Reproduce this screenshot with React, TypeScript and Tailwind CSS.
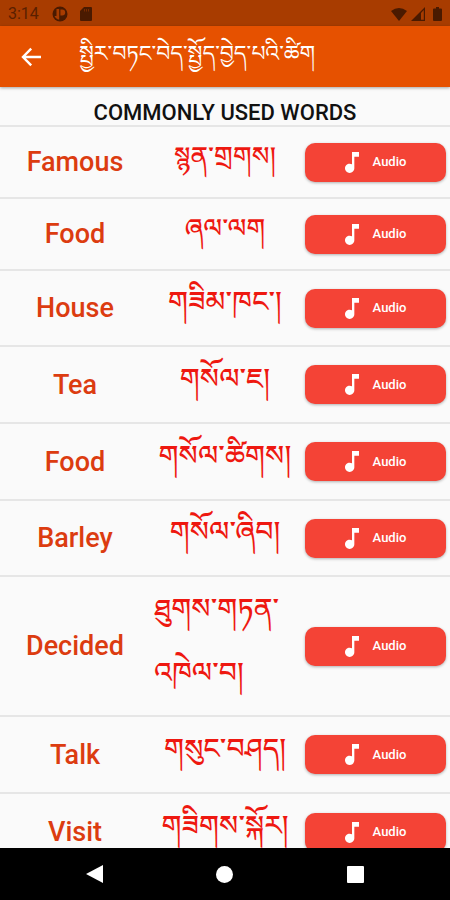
import { clsx } from "clsx";

const words = [
  { english: "Famous", tibetan: "སྙན་གྲགས།", height: "h-[72px]", size: "text-[26px]" },
  { english: "Food", tibetan: "ཞལ་ལག", height: "h-[72px]", size: "text-[26px]" },
  { english: "House", tibetan: "གཟིམ་ཁང་།", height: "h-[76px]", size: "text-[28px]" },
  { english: "Tea", tibetan: "གསོལ་ཇ།", height: "h-[77px]", size: "text-[28px]" },
  { english: "Food", tibetan: "གསོལ་ཚིགས།", height: "h-[77px]", size: "text-[28px]" },
  { english: "Barley", tibetan: "གསོལ་ཞིབ།", height: "h-[76px]", size: "text-[28px]" },
  { english: "Decided", tibetan: "ཐུགས་གཏན་འཁེལ་བ།", height: "h-[140px]", size: "text-[28px]", wraps: true },
  { english: "Talk", tibetan: "གསུང་བཤད།", height: "h-[77px]", size: "text-[28px]" },
  { english: "Visit", tibetan: "གཟིགས་སྐོར།", height: "h-[77px]", size: "text-[28px]" },
];

function StatusBar() {
  return (
    <div className="flex h-[26px] shrink-0 items-center justify-between bg-[#a83c00] pt-0.5 pr-2 pl-2 text-[#4a1a00]">
      <div className="flex items-center gap-3">
        <span className="w-8 text-base leading-5 text-[#5a2000]">3:14</span>
        <svg className="size-4" viewBox="0 0 16 16">
          <circle cx="8" cy="8" r="7.5" fill="currentColor" />
          <path fill="#a83c00" d="M4.500 3h2.700v10.400H6a6 6 0 0 1-3.500-3.500h2ZM8.400 3.500h1.800a3 3 0 0 1 0 6H8.400Z" />
        </svg>
        <svg className="h-[14px] w-3" viewBox="0 0 12 14">
          <path fill="currentColor" d="M4 0h7q1 0 1 1v12q0 1-1 1H1q-1 0-1-1V4Z" />
          <path stroke="#a83c00" strokeWidth="0.5" d="M4.500 2v2.500M6.500 2v2.500M8.500 2v2.500" />
        </svg>
      </div>
      <div className="flex items-center gap-1">
        <svg className="h-[13px] w-4" viewBox="0 0 16 13" fill="currentColor">
          <path d="M0 3Q8-3 16 3L8 13Z" />
        </svg>
        <svg className="size-[14px]" viewBox="0 0 14 14" fill="currentColor">
          <path d="M14 0v14H0Zm-1.200 3L10 6v6.800h2.800Z" fillRule="evenodd" />
        </svg>
        <svg className="ml-1 h-[14px] w-[9px]" viewBox="0 0 9 14" fill="currentColor">
          <path d="M3 0h3v1.500h2q1 0 1 1V13q0 1-1 1H1q-1 0-1-1V2.500q0-1 1-1h2Z" />
        </svg>
      </div>
    </div>
  );
}

function AudioButton({ word }: { word: string }) {
  return (
    <button
      aria-label={`Audio for ${word}`}
      className="flex h-[39px] w-full items-center justify-center gap-3.5 rounded-[10px] bg-[#f44336] text-[13px] leading-4 font-medium text-white shadow-[0_1px_3px_rgba(0,0,0,0.3)]"
    >
      <svg className="h-[21px] w-[14px]" viewBox="6 3 12 18" fill="currentColor">
        <path d="M12 3v10.550c-.59-.34-1.270-.55-2-.55-2.210 0-4 1.790-4 4s1.790 4 4 4 4-1.790 4-4V7h4V3h-6z" />
      </svg>
      Audio
    </button>
  );
}

export default function App() {
  return (
    <div className="flex h-screen flex-col overflow-hidden bg-[#fafafa] font-[Roboto,'Noto_Serif_Tibetan','Noto_Sans_Tibetan',sans-serif]">
      <StatusBar />

      <header className="z-10 flex h-[61px] shrink-0 items-center bg-[#e65100] pl-[19px] text-white shadow-[0_1px_3px_rgba(0,0,0,0.35)]">
        <button aria-label="Back" className="flex size-6 items-center justify-center">
          <svg className="size-6" viewBox="0 0 24 24" fill="none" stroke="currentColor" strokeWidth="2.400">
            <path d="M22 12H4M12.200 3.700 4 12l8.200 8.300" />
          </svg>
        </button>
        <h1 lang="bo" className="ml-9 pb-1.5 text-[22px] leading-8 font-normal whitespace-nowrap">སྤྱིར་བཏང་བེད་སྤྱོད་བྱེད་པའི་ཚིག</h1>
      </header>

      <main className="min-h-0 flex-1 overflow-y-auto [scrollbar-width:none]">
        <h2 className="flex h-[38px] items-end justify-center text-[22px] leading-6 font-medium text-[#111111]">COMMONLY USED WORDS</h2>
        <table className="w-full table-fixed border-collapse">
          <tbody>
            {words.map((w, i) => (
              <tr key={i} className={clsx("border-t-2 border-[#e6e6e6]", w.height)}>
                <th scope="row" className="p-0 text-center text-[27px] leading-8 font-medium text-[#dc3c10]">{w.english}</th>
                <td
                  lang="bo"
                  className={clsx(
                    "px-1 pt-0 font-medium text-[#ee1810]",
                    w.size,
                    w.wraps ? "pb-2.5 text-left leading-[64px]" : "pb-3 text-center leading-10 whitespace-nowrap"
                  )}
                >
                  {w.tibetan}
                </td>
                <td className="py-0 pr-1 pl-[5px]">
                  <AudioButton word={w.english} />
                </td>
              </tr>
            ))}
          </tbody>
        </table>
      </main>

      <nav className="flex h-[52px] shrink-0 items-center justify-around bg-black px-[29px] text-white">
        <button aria-label="Go back">
          <svg className="h-[18px] w-[17px]" viewBox="0 0 17 18" fill="currentColor"><path d="M17 0v18L0 9Z" /></svg>
        </button>
        <button aria-label="Home" className="size-[17px] rounded-full bg-white" />
        <button aria-label="Recent apps" className="size-[17px] rounded-[1px] bg-white" />
      </nav>
    </div>
  );
}
